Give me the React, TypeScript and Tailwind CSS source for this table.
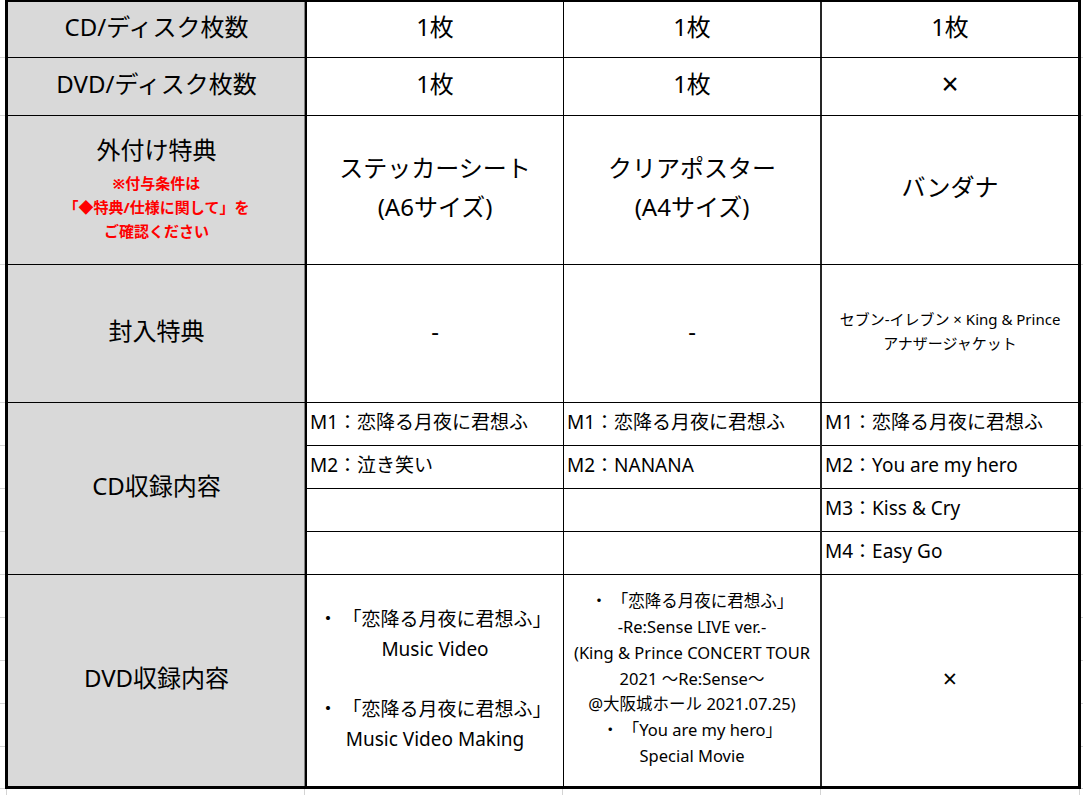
import React from "react";

const gutterSegs = [58, 58, 149, 138, 43, 43, 43, 43, 43, 43, 43, 43, 42];

function Gutter({ w }: { w: string }) {
  return (
    <div className={`${w} flex flex-col`}>
      {gutterSegs.map((h, i) => (
        <div key={i} className="border-b border-[#d4d4d4]" style={{ height: h }} />
      ))}
    </div>
  );
}

const Label = ({ children }: { children: React.ReactNode }) => (
  <div className="w-[299px] shrink-0 bg-[#d9d9d9] border-r-2 border-black shadow-[inset_-1px_0_0_#808080] flex flex-col items-center justify-center pb-[6px] text-[24px] leading-[30px]">
    {children}
  </div>
);

const C2 = ({ children, className = "" }: { children?: React.ReactNode; className?: string }) => (
  <div className={`w-[257px] shrink-0 border-r border-black flex flex-col items-center justify-center text-center ${className}`}>
    {children}
  </div>
);
const C3 = ({ children, className = "" }: { children?: React.ReactNode; className?: string }) => (
  <div className={`w-[258px] shrink-0 border-r-2 border-[#262626] flex flex-col items-center justify-center text-center ${className}`}>
    {children}
  </div>
);
const C4 = ({ children, className = "" }: { children?: React.ReactNode; className?: string }) => (
  <div className={`flex-1 flex flex-col items-center justify-center text-center ${className}`}>{children}</div>
);

const Track = ({ items }: { items: string[] }) => (
  <div className="flex flex-col h-full w-full">
    {[0, 1, 2, 3].map((i) => (
      <div
        key={i}
        className={`${i < 3 ? "h-[43px] border-b border-black" : "flex-1"} flex items-center pl-[3px] pb-[4px] text-[19px] whitespace-nowrap`}
      >
        {items[i] ?? ""}
      </div>
    ))}
  </div>
);

export default function App() {
  return (
    <div
      className="w-[1083px] h-[795px] bg-white text-black flex flex-col overflow-hidden"
      style={{ fontFamily: '"Noto Sans", "Noto Sans CJK JP", sans-serif' }}
    >
      <div className="flex h-[789px]">
        <Gutter w="w-[5px]" />
        <div className="w-[1076px] h-[789px] border-t-2 border-l-[3px] border-r-[3px] border-b-[3px] border-black flex flex-col">
          {/* Row 1 */}
          <div className="h-[56px] flex border-b border-black">
            <Label>CD/ディスク枚数</Label>
            <C2 className="text-[24px] pb-[6px]">1枚</C2>
            <C3 className="text-[24px] pb-[6px]">1枚</C3>
            <C4 className="text-[24px] pb-[6px]">1枚</C4>
          </div>
          {/* Row 2 */}
          <div className="h-[58px] flex border-b border-black">
            <Label>DVD/ディスク枚数</Label>
            <C2 className="text-[24px] pb-[6px]">1枚</C2>
            <C3 className="text-[24px] pb-[6px]">1枚</C3>
            <C4 className="text-[30px] leading-[30px] pb-[6px]">×</C4>
          </div>
          {/* Row 3 */}
          <div className="h-[149px] flex border-b border-black">
            <Label>
              <div className="leading-[38px] mb-[2px]">外付け特典</div>
              <div className="text-[15px] leading-[24px] font-bold text-[#ff0000] text-center">
                <div>※付与条件は</div>
                <div>「◆特典/仕様に関して」を</div>
                <div>ご確認ください</div>
              </div>
            </Label>
            <C2 className="text-[24px] leading-[39px] pb-[6px]">
              <div>ステッカーシート</div>
              <div>(A6サイズ)</div>
            </C2>
            <C3 className="text-[24px] leading-[39px] pb-[6px]">
              <div>クリアポスター</div>
              <div>(A4サイズ)</div>
            </C3>
            <C4 className="text-[24px] pb-[6px]">バンダナ</C4>
          </div>
          {/* Row 4 */}
          <div className="h-[138px] flex border-b border-black">
            <Label>封入特典</Label>
            <C2 className="text-[24px] pb-[6px]">-</C2>
            <C3 className="text-[24px] pb-[6px]">-</C3>
            <C4 className="text-[15px] leading-[24px] pb-[6px]">
              <div>セブン-イレブン × King &amp; Prince</div>
              <div>アナザージャケット</div>
            </C4>
          </div>
          {/* Row 5 */}
          <div className="h-[172px] flex border-b border-black">
            <Label>CD収録内容</Label>
            <C2 className="!justify-start !items-stretch !text-left">
              <Track items={["M1：恋降る月夜に君想ふ", "M2：泣き笑い"]} />
            </C2>
            <C3 className="!justify-start !items-stretch !text-left">
              <Track items={["M1：恋降る月夜に君想ふ", "M2：NANANA"]} />
            </C3>
            <C4 className="!justify-start !items-stretch !text-left">
              <Track items={["M1：恋降る月夜に君想ふ", "M2：You are my hero", "M3：Kiss & Cry", "M4：Easy Go"]} />
            </C4>
          </div>
          {/* Row 6 */}
          <div className="flex-1 flex">
            <Label>DVD収録内容</Label>
            <C2 className="text-[19px] leading-[30px] pb-[4px]">
              <div>・ 「恋降る月夜に君想ふ」</div>
              <div>Music Video</div>
              <div>&nbsp;</div>
              <div>・ 「恋降る月夜に君想ふ」</div>
              <div>Music Video Making</div>
            </C2>
            <C3 className="text-[16.5px] leading-[25.8px] whitespace-nowrap pb-[4px]">
              <div>・ 「恋降る月夜に君想ふ」</div>
              <div>-Re:Sense LIVE ver.-</div>
              <div>(King &amp; Prince CONCERT TOUR</div>
              <div>2021 ～Re:Sense～</div>
              <div>@大阪城ホール 2021.07.25)</div>
              <div>・ 「You are my hero」</div>
              <div>Special Movie</div>
            </C3>
            <C4 className="text-[25px] leading-[25px] pb-[4px]">×</C4>
          </div>
        </div>
        <Gutter w="w-[2px]" />
      </div>
      <div className="h-[6px] flex">
        <div className="w-[7px] border-r border-[#d4d4d4]" />
        <div className="w-[298px] border-r border-[#d4d4d4]" />
        <div className="w-[258px] border-r border-[#d4d4d4]" />
        <div className="w-[258px] border-r border-[#d4d4d4]" />
        <div className="w-[259px] border-r border-[#d4d4d4]" />
      </div>
    </div>
  );
}
